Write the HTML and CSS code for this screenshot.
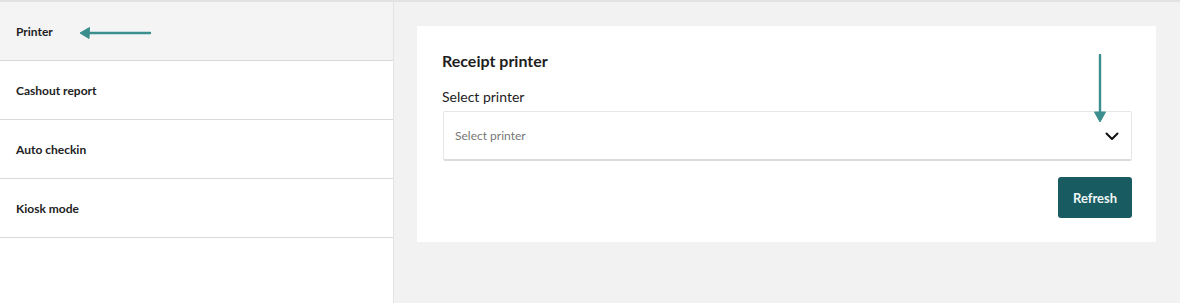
FILE: index.html
```
<!DOCTYPE html>
<html>
<head>
<meta charset="utf-8">
<link rel="stylesheet" href="styles.css">
</head>
<body>
<div class="page">
  <aside class="sidebar">
    <div class="item active"><span>Printer</span>
      <svg class="arrow-left" width="74" height="14" viewBox="0 0 74 14"><path d="M9 7 H71" stroke="#3a8e8e" stroke-width="2.4" stroke-linecap="round"/><path d="M1 7 L10.5 1.5 L10 12.5 Z" fill="#3a8e8e" stroke="#3a8e8e" stroke-width="1" stroke-linejoin="round"/></svg>
    </div>
    <div class="item"><span>Cashout report</span></div>
    <div class="item"><span>Auto checkin</span></div>
    <div class="item"><span>Kiosk mode</span></div>
  </aside>
  <main class="main">
    <section class="card">
      <h2 class="title">Receipt printer</h2>
      <label class="label">Select printer</label>
      <div class="select">
        <span class="placeholder">Select printer</span>
        <svg class="chev" width="14" height="9" viewBox="0 0 14 9"><path d="M1.5 1.5 L7 7 L12.5 1.5" fill="none" stroke="#111" stroke-width="2" stroke-linecap="round" stroke-linejoin="round"/></svg>
        <svg class="arrow-down" width="14" height="70" viewBox="0 0 14 70"><path d="M7 1 V60" stroke="#3a8e8e" stroke-width="2.4" stroke-linecap="round"/><path d="M1.5 58 L12.5 58 L7 68 Z" fill="#3a8e8e" stroke="#3a8e8e" stroke-width="1" stroke-linejoin="round"/></svg>
      </div>
      <div class="actions"><button class="btn">Refresh</button></div>
    </section>
  </main>
</div>
</body>
</html>
```
FILE: styles.css
```
* { box-sizing: border-box; }
html, body { margin: 0; padding: 0; }
body {
  width: 1180px; height: 303px; overflow: hidden;
  font-family: Lato, "Open Sans", sans-serif;
  background: #f2f2f2;
  color: #1e1e1e;
}
.page {
  display: flex;
  height: 303px;
  border-top: 2px solid #e2e2e2;
}
.sidebar {
  width: 394px;
  background: #fff;
  border-right: 1px solid #e3e3e3;
  display: flex;
  flex-direction: column;
}
.item {
  height: 59px;
  border-bottom: 1px solid #d9d9d9;
  display: flex;
  align-items: center;
  padding-left: 16px;
  font-size: 12px;
  font-weight: 700;
  color: #222;
  position: relative;
}
.item.active { background: #f4f4f5; }
.arrow-left { position: absolute; left: 79px; top: 24px; }
.main {
  flex: 1;
  padding: 24px 24px 0 23px;
}
.card {
  background: #fff;
  width: 739px;
  height: 216px;
  padding: 24px 24px 0 25px;
  display: flex;
  flex-direction: column;
}
.title {
  margin: 0;
  font-size: 16px;
  font-weight: 700;
  color: #1e1e1e;
  line-height: 22px;
}
.label {
  margin-top: 16px;
  font-size: 14px;
  line-height: 18px;
  color: #222;
}
.select {
  margin-top: 5px;
  height: 50px;
  width: 689px;
  margin-left: 1px;
  border: 1px solid #e6e6e6;
  border-bottom: 2px solid #dcdcdc;
  border-radius: 2px;
  display: flex;
  align-items: center;
  justify-content: space-between;
  padding: 0 12px 0 11px;
  position: relative;
}
.placeholder { font-size: 12px; color: #777; }
.chev { margin-top: 1px; }
.arrow-down { position: absolute; right: 24px; top: -58px; }
.actions {
  display: flex;
  justify-content: flex-end;
  margin-top: 16px;
}
.btn {
  width: 74px;
  height: 41px;
  background: #185c62;
  color: #eef6f6;
  border: none;
  border-radius: 3px;
  font-family: Lato, sans-serif;
  font-weight: 700;
  font-size: 13px;
}
```
